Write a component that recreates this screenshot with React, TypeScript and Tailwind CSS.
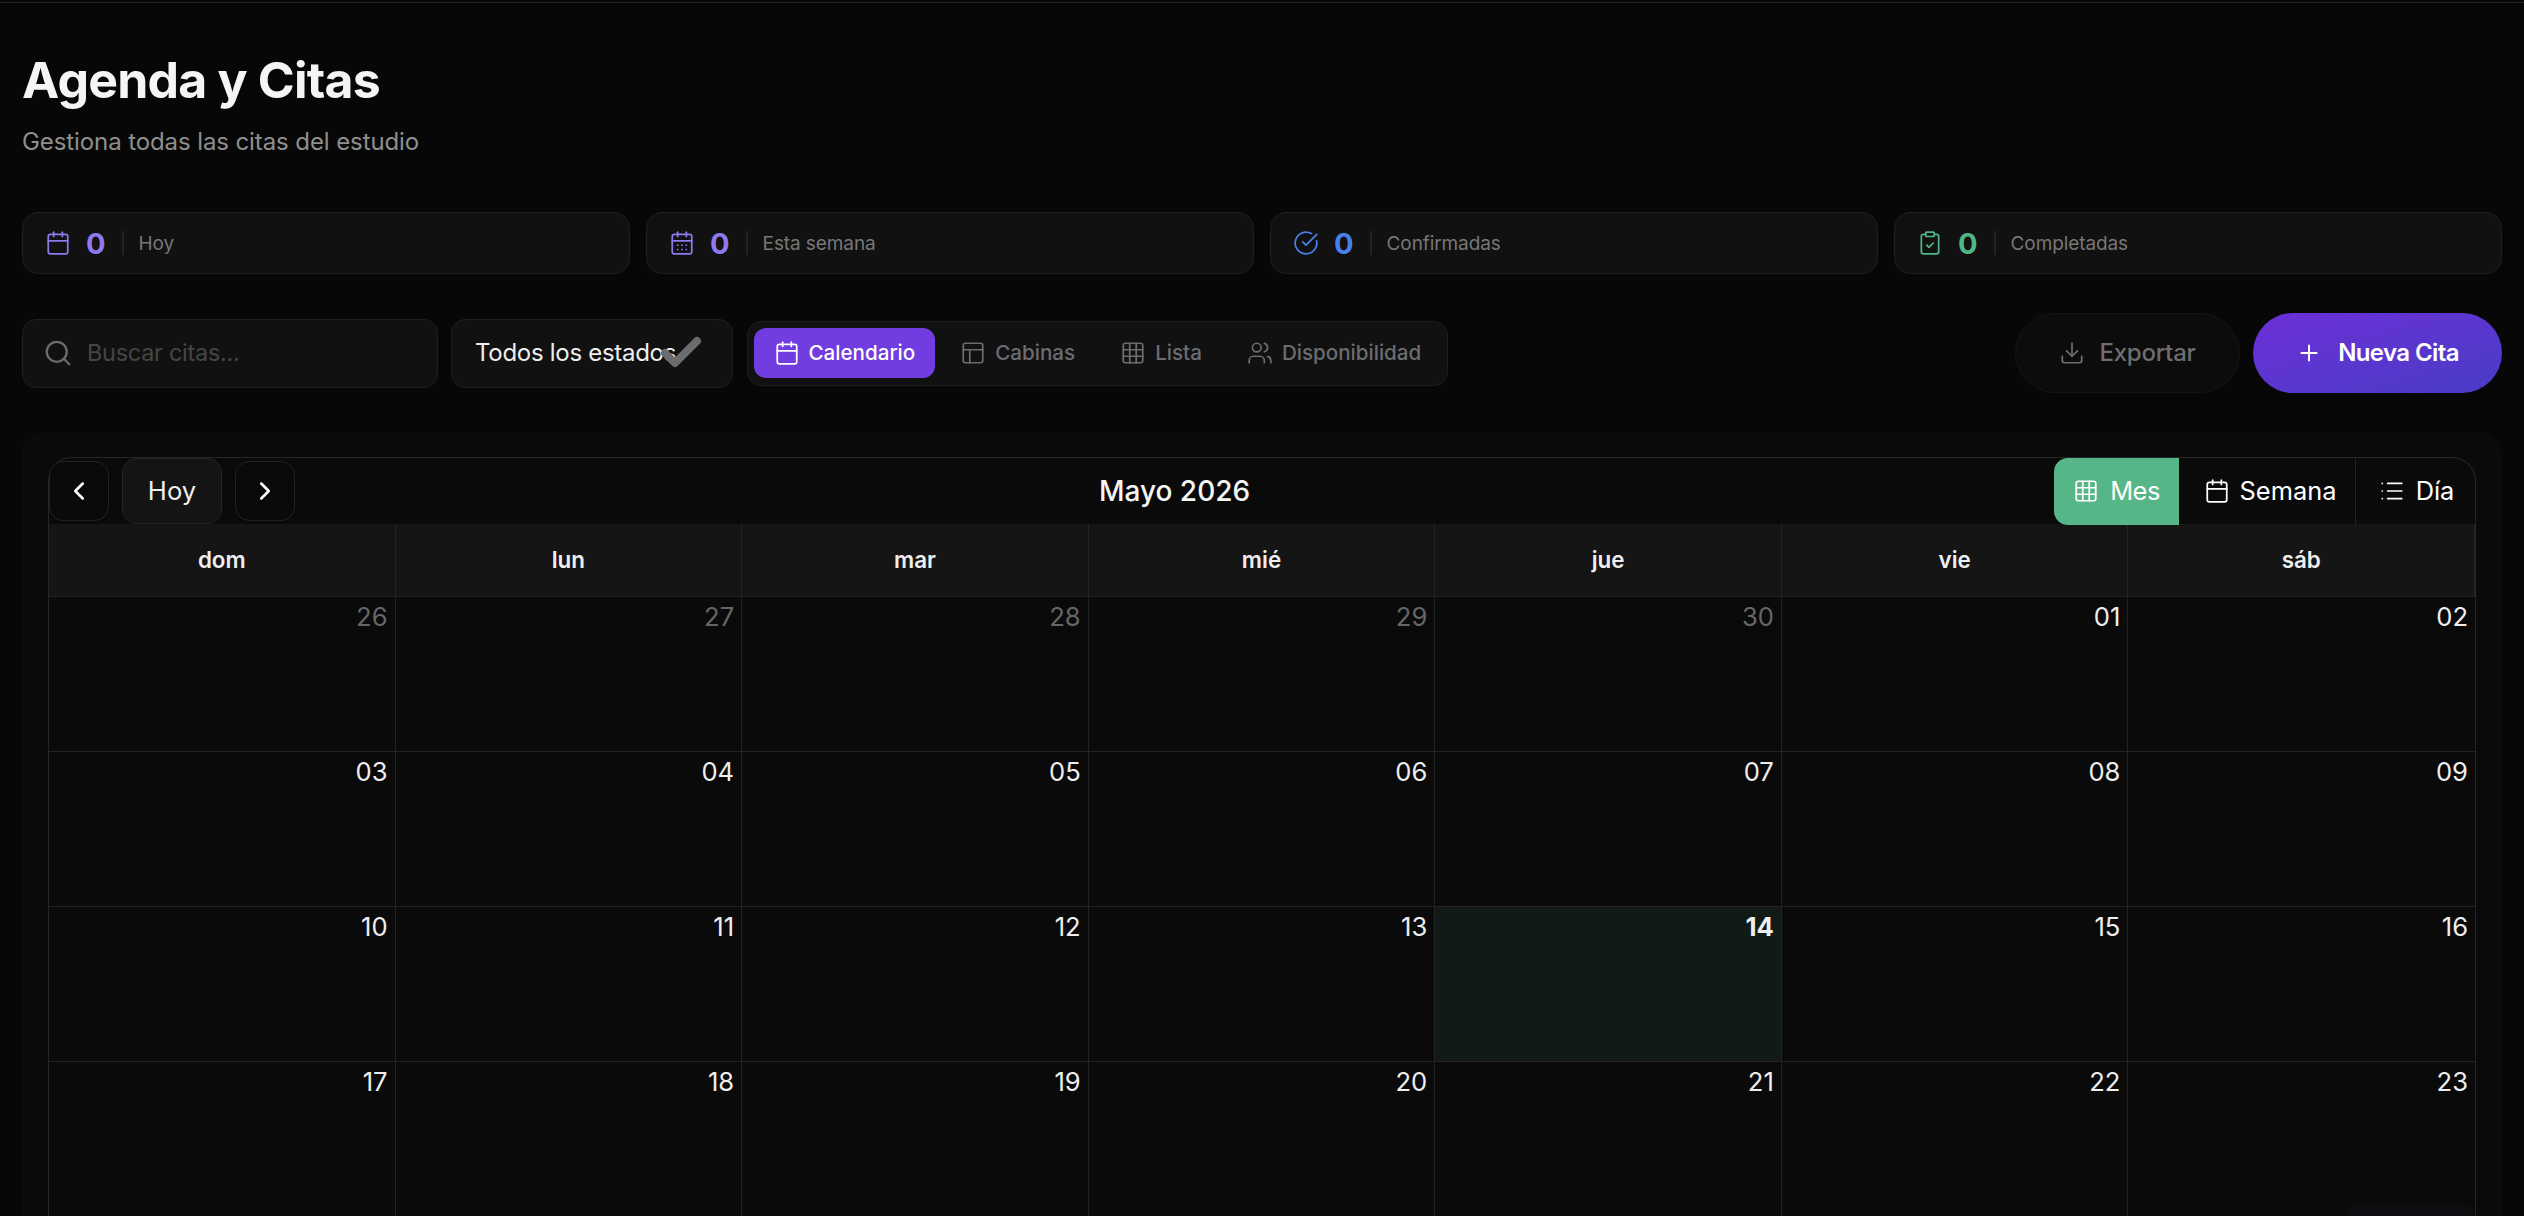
import { Calendar, CalendarDays, Check, ChevronLeft, ChevronRight, CircleCheckBig, ClipboardCheck, Download, Grid3x3, List, PanelsTopLeft, Plus, Search, Users } from 'lucide-react';

const stats = [
  { icon: Calendar, value: 0, label: 'Hoy', color: 'text-[#9079ee]' },
  { icon: CalendarDays, value: 0, label: 'Esta semana', color: 'text-[#9079ee]' },
  { icon: CircleCheckBig, value: 0, label: 'Confirmadas', color: 'text-[#4a80ec]' },
  { icon: ClipboardCheck, value: 0, label: 'Completadas', color: 'text-[#4fb687]' },
];

const tabs = [
  { icon: Calendar, label: 'Calendario', active: true },
  { icon: PanelsTopLeft, label: 'Cabinas', active: false },
  { icon: Grid3x3, label: 'Lista', active: false },
  { icon: Users, label: 'Disponibilidad', active: false },
];

const weekDays = ['dom', 'lun', 'mar', 'mié', 'jue', 'vie', 'sáb'];

const days = [
  '26', '27', '28', '29', '30', '01', '02',
  '03', '04', '05', '06', '07', '08', '09',
  '10', '11', '12', '13', '14', '15', '16',
  '17', '18', '19', '20', '21', '22', '23',
];

export default function App() {
  return (
    <div className="relative h-[1216px] overflow-hidden bg-[#070707] font-['Inter',sans-serif]">
      <div className="h-[3px] border-b border-[#262626]" />

      <div className="px-[22px] pt-[48px]">
        {/* Cabecera */}
        <h1 className="text-[50px] leading-[58px] font-bold tracking-[-0.016em] text-[#f5f5f5]">Agenda y Citas</h1>
        <p className="mt-[17px] text-[24px] leading-[32px] tracking-[-0.004em] text-[#8f8f8f]">Gestiona todas las citas del estudio</p>

        {/* Resumen */}
        <div className="mt-[54px] grid grid-cols-4 gap-4">
          {stats.map((stat) => {
            const Icon = stat.icon;
            return (
              <div key={stat.label} className="flex h-[62px] items-center rounded-[16px] border border-[#1e1e1e] bg-[#111111] pl-[22px]">
                <Icon size={26} strokeWidth={1.6} className={stat.color} />
                <span className={`ml-[15px] text-[29px] leading-none font-bold ${stat.color}`}>{stat.value}</span>
                <div className="ml-[16px] h-[24px] w-[2px] bg-[#232323]" />
                <span className="ml-[15px] pt-[2px] text-[19px] tracking-[-0.005em] text-[#777777]">{stat.label}</span>
              </div>
            );
          })}
        </div>

        {/* Filtros */}
        <div className="mt-[39px] flex h-[80px] items-center">
          <div className="flex h-[69px] w-[416px] items-center rounded-[14px] border border-[#1e1e1e] bg-[#111111] pl-[20px]">
            <Search size={30} strokeWidth={1.8} className="text-[#6b6b70]" />
            <span className="ml-[14px] text-[23.4px] tracking-[-0.01em] text-[#454545]">Buscar citas...</span>
          </div>
          <div className="relative ml-[13px] flex h-[69px] w-[282px] items-center rounded-[14px] border border-[#1e1e1e] bg-[#111111] pl-[23px]">
            <span className="text-[24px] tracking-[-0.012em] text-[#eeeeee]">Todos los estados</span>
            <Check size={48} strokeWidth={4} className="absolute top-[9px] left-[205px] text-[#6b6b70]" />
          </div>
          <div className="ml-[14px] flex h-[65px] items-center gap-[6px] rounded-[14px] border border-[#1e1e1e] bg-[#111111] px-[6px]">
            {tabs.map((tab) => {
              const Icon = tab.icon;
              return (
                <div
                  key={tab.label}
                  className={`flex h-[50px] items-center gap-[9px] rounded-[12px] px-[19.5px] text-[20.6px] font-medium ${tab.active ? 'bg-[#713ce0] text-white' : 'text-[#6b6b70]'}`}
                >
                  <Icon size={26} strokeWidth={1.6} />
                  <span>{tab.label}</span>
                </div>
              );
            })}
          </div>
          <div className="ml-auto flex h-[80px] w-[225px] items-center justify-center gap-[14px] rounded-full border border-[#161616] bg-[#0c0c0c] text-[#6e6e6e]">
            <Download size={26} strokeWidth={1.6} />
            <span className="text-[24px] font-medium tracking-[-0.01em]">Exportar</span>
          </div>
          <div className="ml-[13px] flex h-[80px] w-[249px] items-center justify-center gap-[16px] rounded-full bg-gradient-to-br from-[#6c2fd8] to-[#483bc6] text-white">
            <Plus size={26} strokeWidth={1.8} />
            <span className="text-[24px] font-semibold tracking-[-0.025em]">Nueva Cita</span>
          </div>
        </div>

        {/* Calendario */}
        <div className="mt-[39px] rounded-t-[24px] border border-[#0c0c0c] bg-[#0a0a0a] px-[25px] pt-[24px]">
          <div className="relative flex h-[67px] items-center justify-between rounded-t-[24px] border-x border-t border-[#262626]">
            <div className="flex items-center gap-[13px]">
              <div className="flex h-[60px] w-[60px] items-center justify-center rounded-[14px] border border-[#222222] bg-[#0a0a0a] text-white">
                <ChevronLeft size={30} strokeWidth={2} />
              </div>
              <div className="flex h-[66px] w-[100px] items-center justify-center rounded-[14px] border border-[#222222] bg-[#141414] text-[25.6px] text-[#eeeeee]">
                Hoy
              </div>
              <div className="flex h-[60px] w-[60px] items-center justify-center rounded-[14px] border border-[#222222] bg-[#0a0a0a] text-white">
                <ChevronRight size={30} strokeWidth={2} />
              </div>
            </div>
            <h2 className="text-[28px] font-medium text-[#f5f5f5]">Mayo 2026</h2>
            <div className="flex h-[67px] text-[25.4px] text-white">
              <div className="flex w-[125px] items-center justify-center gap-[11px] rounded-l-[14px] bg-[#56b687]">
                <Grid3x3 size={26} strokeWidth={1.6} />
                <span className="tracking-[-0.02em]">Mes</span>
              </div>
              <div className="flex w-[177px] items-center justify-center gap-[10px] border-r border-[#222222] pl-[6px]">
                <Calendar size={26} strokeWidth={1.6} />
                <span>Semana</span>
              </div>
              <div className="flex w-[119px] items-center justify-center gap-[11px] pl-[2px]">
                <List size={26} strokeWidth={1.6} />
                <span>Día</span>
              </div>
            </div>
          </div>

          <div className="grid grid-cols-7 border-x border-[#262626]">
            {weekDays.map((day) => (
              <div key={day} className="flex h-[73px] items-center justify-center border-r border-b border-[#232323] bg-[#151515] text-[22.4px] font-semibold text-[#eeeeee] last:border-r-0">
                {day}
              </div>
            ))}
            {days.map((day, index) => (
              <div
                key={index}
                className={`h-[155px] border-r border-b border-[#232323] pt-[4px] pr-[7px] text-right text-[25.6px] leading-[32px] [&:nth-child(7n)]:border-r-0 ${index < 5 ? 'text-[#666666]' : 'text-[#eeeeee]'} ${day === '14' ? 'bg-[#111a15] font-bold' : ''}`}
              >
                {day}
              </div>
            ))}
          </div>
        </div>
      </div>

      <div className="absolute right-[50px] bottom-0 h-[8px] w-[130px] rounded-t-full bg-[#12121a] blur-[5px]" />
    </div>
  );
}
